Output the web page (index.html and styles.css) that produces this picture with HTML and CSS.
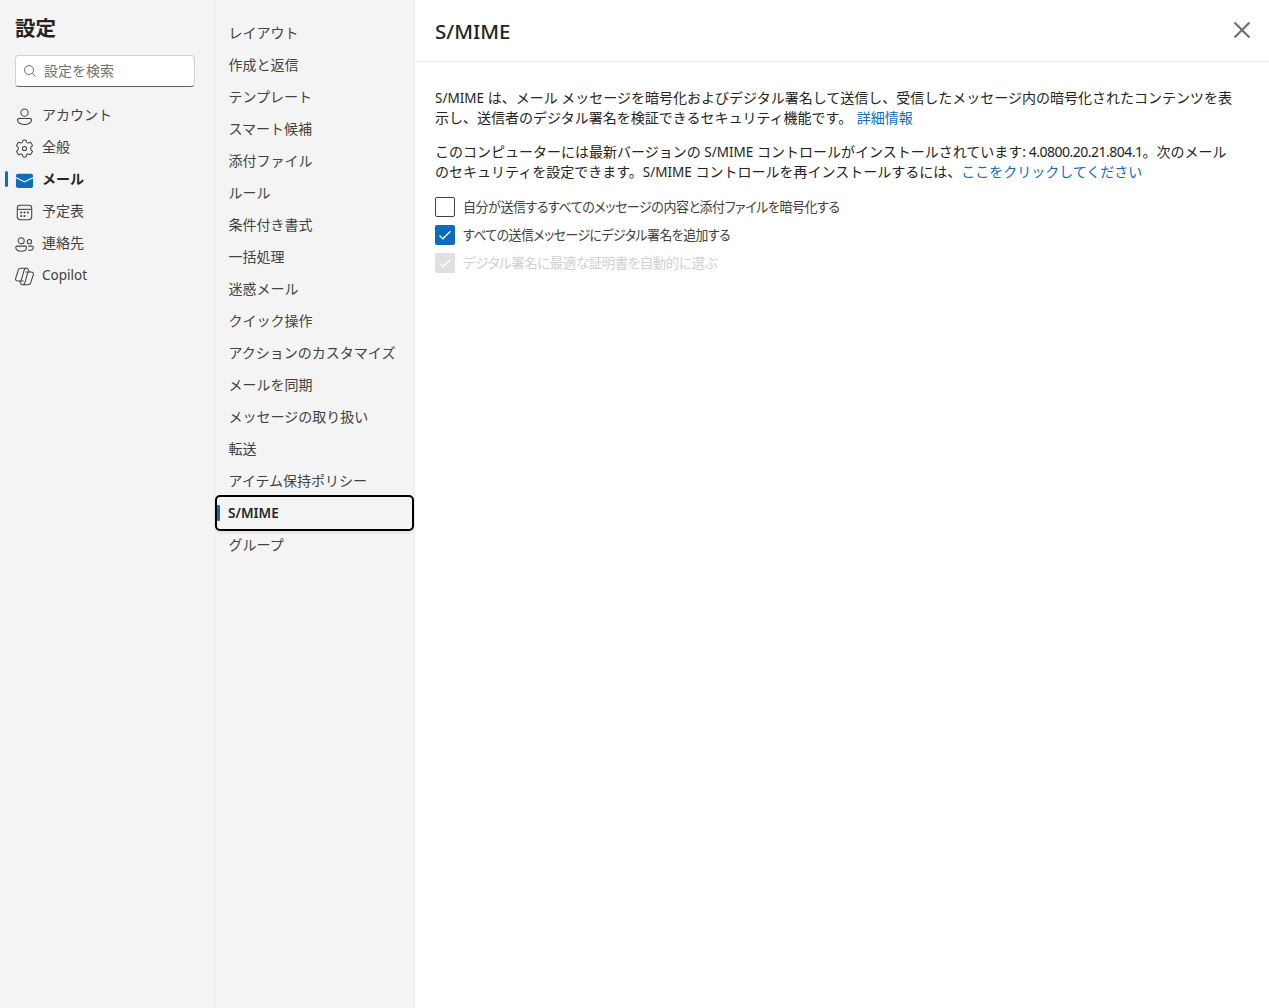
FILE: index.html
```html
<!DOCTYPE html>
<html lang="ja">
<head>
<meta charset="utf-8">
<title>設定 - S/MIME</title>
<link rel="stylesheet" href="styles.css">
</head>
<body>
<div class="settings">
  <nav class="sidebar">
    <h1 class="sidebar-title">設定</h1>
    <div class="search">
      <svg class="search-icon" width="14" height="14" viewBox="0 0 14 14"><circle cx="6" cy="6" r="4.5"/><path d="M9.4 9.4L12.5 12.5"/></svg>
      <span>設定を検索</span>
    </div>
    <ul class="categories">
      <li class="category"><svg class="icon" viewBox="0 0 20 20"><circle cx="10" cy="6" r="3.8"/><path d="M4.500 12h11a1.800 1.800 0 0 1 1.900 1.800c0 2.700-3.400 4.700-7.400 4.700s-7.400-2-7.400-4.700A1.800 1.800 0 0 1 4.500 12z"/></svg><span>アカウント</span></li>
      <li class="category"><svg class="icon" viewBox="0 0 20 20"><circle cx="10" cy="10" r="2.200"/><path d="M8.300 1.300Q10 .9 11.700 1.300L12.100 3.300Q12.600 4.400 13.800 4.100L16 3.400Q17.700 5 18.400 7L16.900 8.500Q15.800 10 16.900 11.500L18.400 13Q17.700 15 16 16.600L13.800 15.900Q12.600 15.600 12.100 16.700L11.700 18.700Q10 19.100 8.300 18.700L7.900 16.700Q7.400 15.600 6.200 15.900L4 16.600Q2.300 15 1.600 13L3.100 11.500Q4.200 10 3.100 8.500L1.600 7Q2.300 5 4 3.400L6.200 4.100Q7.400 4.400 7.900 3.300z"/></svg><span>全般</span></li>
      <li class="category category-current"><svg class="icon icon-mail" viewBox="0 0 20 20"><path d="M1 6.200V5.200A2.200 2.200 0 0 1 3.200 3h13.600A2.200 2.200 0 0 1 19 5.200v1L10 10.900z"/><path d="M1 7.500L10 12.200l9-4.700v8.300a2.200 2.200 0 0 1-2.200 2.200H3.200A2.200 2.200 0 0 1 1 15.800z"/></svg><span>メール</span></li>
      <li class="category"><svg class="icon" viewBox="0 0 20 20"><rect x="2.400" y="2.400" width="15.200" height="15.200" rx="3"/><path d="M2.400 6.700h15.200"/><g class="dots"><circle cx="6.500" cy="10" r="1.100"/><circle cx="10" cy="10" r="1.100"/><circle cx="13.500" cy="10" r="1.100"/><circle cx="6.500" cy="13.700" r="1.100"/><circle cx="10" cy="13.700" r="1.100"/></g></svg><span>予定表</span></li>
      <li class="category"><svg class="icon" viewBox="0 0 20 20"><circle cx="6.500" cy="6" r="3.200"/><circle cx="15.200" cy="7" r="2.300"/><path d="M2.300 11.700h8.400a1.500 1.500 0 0 1 1.500 1.500c0 2.500-2.400 3.900-5.700 3.900S.8 15.700.8 13.200a1.500 1.500 0 0 1 1.500-1.500zM14 11.700h3.900a1.400 1.400 0 0 1 1.400 1.400c0 2-1.500 3-4 3q-.8 0-1.500-.200"/></svg><span>連絡先</span></li>
      <li class="category"><svg class="icon icon-copilot" viewBox="0 0 20 20"><path d="M12.800 1.300H6.200Q4.200 1.300 3.500 3.200L.8 11.600Q0 14.800 3 14.800h1.700Q6.400 14.800 6.900 13L9.500 3.500Q10.100 1.300 12.100 1.300q1.600 0 2.100 1.700l.7 2.200M7.200 18.700h6.600q2 0 2.700-1.900l2.700-8.400q.8-3.200-2.200-3.200h-1.700q-1.700 0-2.200 1.800l-2.600 9.500q-.6 2.200-2.600 2.200-1.600 0-2.100-1.700l-.7-2.200M15.300 5.200H11M4.700 14.800H9"/></svg><span class="latin">Copilot</span></li>
    </ul>
  </nav>
  <nav class="subnav">
    <ul class="sections">
      <li class="section">レイアウト</li>
      <li class="section">作成と返信</li>
      <li class="section">テンプレート</li>
      <li class="section">スマート候補</li>
      <li class="section">添付ファイル</li>
      <li class="section">ルール</li>
      <li class="section">条件付き書式</li>
      <li class="section">一括処理</li>
      <li class="section">迷惑メール</li>
      <li class="section">クイック操作</li>
      <li class="section">アクションのカスタマイズ</li>
      <li class="section">メールを同期</li>
      <li class="section">メッセージの取り扱い</li>
      <li class="section">転送</li>
      <li class="section">アイテム保持ポリシー</li>
      <li class="section section-current">S/MIME</li>
      <li class="section">グループ</li>
    </ul>
  </nav>
  <main class="panel">
    <header class="panel-header">
      <h2 class="panel-title">S/MIME</h2>
      <svg class="close" width="18" height="18" viewBox="0 0 18 18"><path d="M1.500 1.500l15 15M16.500 1.500l-15 15"/></svg>
    </header>
    <div class="panel-body">
      <p class="text"><span class="latin">S/MIME</span> は、メール メッセージを暗号化およびデジタル署名して送信し、受信したメッセージ内の暗号化されたコンテンツを表<br>示し、送信者のデジタル署名を検証できるセキュリティ機能です。 <a class="link link-more">詳細情報</a></p>
      <p class="text">このコンピューターには最新バージョンの <span class="latin">S/MIME</span> コントロールがインストールされています<span class="digits">: 4.0800.20.21.804.1</span>。次のメール<br>のセキュリティを設定できます。<span class="latin">S/MIME</span> コントロールを再インストールするには、<a class="link">ここをクリックしてください</a></p>
      <div class="options">
        <div class="option"><span class="box"></span><span class="label label-encrypt">自分が送信するすべてのメッセージの内容と添付ファイルを暗号化する</span></div>
        <div class="option"><span class="box box-checked"><svg width="14" height="14" viewBox="0 0 14 14"><path d="M1.500 7.500l3.300 3.300 7.700-7.600"/></svg></span><span class="label label-sign">すべての送信メッセージにデジタル署名を追加する</span></div>
        <div class="option option-disabled"><span class="box box-checked"><svg width="14" height="14" viewBox="0 0 14 14"><path d="M1.500 7.500l3.300 3.300 7.700-7.600"/></svg></span><span class="label label-auto">デジタル署名に最適な証明書を自動的に選ぶ</span></div>
      </div>
    </div>
  </main>
</div>
</body>
</html>
```
FILE: styles.css
```css
* { box-sizing: border-box; }
body {
  margin: 0;
  font-family: "Noto Sans", "Noto Sans CJK JP", sans-serif;
  font-size: 14px;
  line-height: 20px;
  color: #242424;
  background: #fff;
}
h1, h2, p, ul { margin: 0; padding: 0; }
ul { list-style: none; }
.settings { display: flex; height: 1008px; overflow: hidden; }
.sidebar { width: 214px; flex: none; background: #f4f4f4; padding-top: 13px; }
.sidebar-title { padding-left: 15px; font-size: 20.5px; line-height: 30px; font-weight: 700; }
.search {
  display: flex;
  align-items: center;
  gap: 6px;
  width: 180px;
  height: 32px;
  margin: 12px 0 0 15px;
  padding-left: 8px;
  border: 1px solid #d1d1d1;
  border-bottom-color: #616161;
  border-radius: 4px;
  background: #fff;
  color: #707070;
}
.search span { margin-top: -1px; }
.search-icon { margin-left: -1px; margin-right: 1px; fill: none; stroke: #707070; stroke-width: 1; }
.categories { padding-top: 12px; }
.category {
  display: flex;
  align-items: center;
  gap: 9px;
  height: 32px;
  padding-left: 15px;
  color: #424242;
}
.category span { margin-top: -1px; }
.icon {
  width: 19px;
  height: 19px;
  flex: none;
  margin-top: 3px;
  margin-right: -1px;
  fill: none;
  stroke: #424242;
  stroke-width: 1.1;
  stroke-linejoin: round;
}
.dots { fill: #424242; stroke: none; }
.icon-mail { fill: #0f6cbd; stroke: none; }
.category-current { padding-left: 5px; color: #242424; font-weight: 700; }
.category-current::before {
  content: "";
  width: 3px;
  height: 16px;
  margin-right: -2px;
  border-radius: 2px;
  background: #0f6cbd;
}
.subnav {
  width: 201px;
  flex: none;
  padding-top: 17px;
  background: #f4f4f4;
  border-left: 1px solid #efefef;
  border-right: 1px solid #ececec;
}
.section { height: 32px; padding-left: 13.5px; line-height: 32px; color: #424242; white-space: nowrap; }
.section-current {
  display: flex;
  align-items: center;
  height: 36px;
  margin: -2px 0;
  padding-left: 1px;
  border: 2px solid #000;
  border-radius: 5px;
  box-shadow: 0 2px 3px rgba(0, 0, 0, 0.08);
  color: #242424;
  font-size: 13.6px;
  font-weight: 600;
}
.section-current::before {
  content: "";
  width: 3px;
  height: 16px;
  margin: 0 8px 0 -1px;
  border-radius: 1px;
  background: #0f6cbd;
}
.panel { flex: 1; min-width: 0; }
.panel-header {
  display: flex;
  align-items: center;
  justify-content: space-between;
  height: 62px;
  padding: 0 18px 0 20px;
  border-bottom: 1px solid #efefef;
}
.panel-title { margin-top: 1px; font-size: 20.5px; line-height: 28px; font-weight: 500; letter-spacing: 0; }
.close { margin-top: -1px; fill: none; stroke: #707070; stroke-width: 2.2; }
.panel-body { padding: 26px 20px; }
.text { margin-bottom: 14px; white-space: nowrap; }
.latin { font-size: 13.5px; }
.digits { letter-spacing: -0.5px; }
.link { color: #0f6cbd; }
.link-more { margin-left: 1px; }
.options { display: flex; flex-direction: column; margin-top: -3px; }
.option { display: flex; align-items: center; gap: 8px; height: 28px; color: #424242; }
.box {
  display: flex;
  align-items: center;
  justify-content: center;
  width: 20px;
  height: 20px;
  flex: none;
  border: 1px solid #424242;
  border-radius: 2px;
}
.box svg { fill: none; stroke: #fff; stroke-width: 1.2; }
.box-checked { border: 0; background: #0f6cbd; }
.label {
  margin-top: -1px;
  white-space: nowrap;
  font-feature-settings: "palt";
  letter-spacing: -0.5px;
  transform-origin: left;
}
.label-encrypt { transform: scaleX(0.93); }
.label-sign { transform: scaleX(0.916); }
.label-auto { transform: scaleX(0.966); }
.option-disabled { color: #d0d0d0; }
.option-disabled .box { background: #e0e0e0; }
```
